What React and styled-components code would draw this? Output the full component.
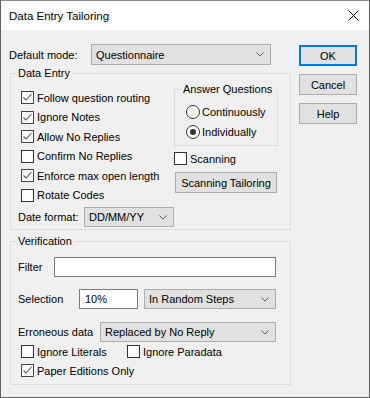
import React from "react";
import styled, { createGlobalStyle } from "styled-components";

const GlobalStyle = createGlobalStyle`
  html, body {
    margin: 0;
    padding: 0;
    background: #f0f0f0;
  }
  body {
    font-family: "Liberation Sans", Arial, sans-serif;
    font-size: 11px;
    color: #000;
  }
`;

const Window = styled.div`
  width: 370px;
  height: 398px;
  box-sizing: border-box;
  border: 1px solid #5f5f5f;
  border-top-color: #8a8a8a;
  background: #f0f0f0;
  display: flex;
  flex-direction: column;
`;

const TitleBar = styled.div`
  height: 29px;
  background: #fff;
  display: flex;
  align-items: center;
  justify-content: space-between;
  padding: 0 10px 0 8px;
`;

const Title = styled.span`
  font-size: 11.5px;
  line-height: 14px;
`;

const Body = styled.div`
  flex: 1;
  display: flex;
  padding-left: 8px;
`;

const Main = styled.div`
  width: 282px;
  display: flex;
  flex-direction: column;
`;

const Side = styled.div`
  margin-left: 8px;
  padding-top: 15px;
  display: flex;
  flex-direction: column;
  gap: 8px;
`;

const Button = styled.button`
  box-sizing: border-box;
  width: ${(p) => p.width || 58}px;
  height: 21px;
  margin: 0;
  padding: 0;
  font-family: inherit;
  font-size: 11px;
  color: #000;
  background: #e1e1e1;
  border: ${(p) => (p.primary ? "2px solid #0078d7" : "1px solid #adadad")};
  border-radius: 0;
`;

const Row = styled.div`
  display: flex;
  align-items: center;
  height: ${(p) => p.h || 20}px;
  margin-top: ${(p) => p.mt || 0}px;
  margin-left: ${(p) => p.ml || 0}px;
`;

const Label = styled.span`
  width: ${(p) => p.w}px;
  flex-shrink: 0;
  white-space: nowrap;
`;

const SelectBox = styled.div`
  box-sizing: border-box;
  width: ${(p) => p.w}px;
  height: ${(p) => p.h || 20}px;
  background: #e1e1e1;
  border: 1px solid #adadad;
  display: flex;
  align-items: center;
  justify-content: space-between;
  padding: 0 6px 0 4px;
  white-space: nowrap;
`;

const TextInput = styled.div`
  box-sizing: border-box;
  width: ${(p) => p.w}px;
  height: 20px;
  background: #fff;
  border: 1px solid #7a7a7a;
  display: flex;
  align-items: center;
  padding-left: ${(p) => p.pl || 4}px;
`;

const Group = styled.fieldset`
  margin: ${(p) => p.mt || 0}px 0 0 ${(p) => p.ml ?? 1}px;
  padding: 0;
  width: ${(p) => p.w}px;
  box-sizing: border-box;
  border: 1px solid #dcdcdc;
  min-width: 0;
`;

const Legend = styled.legend`
  margin-left: ${(p) => p.ml || 5}px;
  padding: 0 2px;
  font-size: 11px;
  line-height: 14px;
  height: 14px;
`;

const DataEntryBody = styled.div`
  display: flex;
`;

const LeftCol = styled.div`
  width: 163px;
  box-sizing: border-box;
  padding: 8px 0 2px 10px;
  display: flex;
  flex-direction: column;
`;

const RightCol = styled.div`
  width: 104px;
  display: flex;
  flex-direction: column;
`;

const RadioList = styled.div`
  padding: 6px 0 3px 11px;
`;

const VerifyBody = styled.div`
  padding: 0 0 4px 7px;
  display: flex;
  flex-direction: column;
`;

const Item = styled.label`
  display: flex;
  align-items: center;
  gap: ${(p) => p.gap ?? 3}px;
  height: ${(p) => p.h || 19.5}px;
  width: ${(p) => (p.w ? `${p.w}px` : "auto")};
  white-space: nowrap;
`;

const Box = styled.span`
  box-sizing: border-box;
  width: 13px;
  height: 13px;
  flex-shrink: 0;
  background: #fff;
  border: 1px solid ${(p) => (p.checked ? "#444" : "#333")};
  display: flex;
  align-items: center;
  justify-content: center;
`;

const Circle = styled.span`
  box-sizing: border-box;
  width: 14px;
  height: 14px;
  flex-shrink: 0;
  border-radius: 50%;
  background: #fff;
  border: 1px solid #333;
  display: flex;
  align-items: center;
  justify-content: center;
`;

const Dot = styled.span`
  width: 6px;
  height: 6px;
  border-radius: 50%;
  background: #333;
`;

const Chevron = () => (
  <svg width="8" height="5" viewBox="0 0 8 5">
    <polyline points="0.5,0.5 4,4 7.5,0.5" fill="none" stroke="#606060" strokeWidth="1" />
  </svg>
);

const CloseIcon = () => (
  <svg width="11" height="11" viewBox="0 0 11 11">
    <path d="M0.5 0.5 L10.5 10.5 M10.5 0.5 L0.5 10.5" stroke="#000" strokeWidth="1" />
  </svg>
);

const Check = ({ checked, children, w, h }) => (
  <Item w={w} h={h}>
    <Box checked={checked}>
      {checked && (
        <svg width="11" height="11" viewBox="0 0 11 11">
          <polyline points="1.5,5.5 4,8 9.5,2" fill="none" stroke="#555" strokeWidth="1.1" />
        </svg>
      )}
    </Box>
    {children}
  </Item>
);

const Radio = ({ checked, children }) => (
  <Item h={20} gap={2}>
    <Circle>{checked && <Dot />}</Circle>
    {children}
  </Item>
);

const Select = ({ w, h, children }) => (
  <SelectBox w={w} h={h}>
    <span>{children}</span>
    <Chevron />
  </SelectBox>
);

export default function App() {
  return (
    <>
      <GlobalStyle />
      <Window>
        <TitleBar>
          <Title>Data Entry Tailoring</Title>
          <CloseIcon />
        </TitleBar>
        <Body>
          <Main>
            <Row mt={14} h={21}>
              <Label w={82}>Default mode:</Label>
              <Select w={180} h={21}>Questionnaire</Select>
            </Row>

            <Group mt={1} w={281}>
              <Legend ml={5}>Data Entry</Legend>
              <DataEntryBody>
                <LeftCol>
                  <Check checked>Follow question routing</Check>
                  <Check checked>Ignore Notes</Check>
                  <Check checked>Allow No Replies</Check>
                  <Check>Confirm No Replies</Check>
                  <Check checked>Enforce max open length</Check>
                  <Check>Rotate Codes</Check>
                  <Row mt={2} ml={-3}>
                    <Label w={66}>Date format:</Label>
                    <Select w={90}>DD/MM/YY</Select>
                  </Row>
                </LeftCol>
                <RightCol>
                  <Group mt={2} ml={0} w={104}>
                    <Legend ml={6}>Answer Questions</Legend>
                    <RadioList>
                      <Radio>Continuously</Radio>
                      <Radio checked>Individually</Radio>
                    </RadioList>
                  </Group>
                  <Row mt={6} h={13}>
                    <Check h={13}>Scanning</Check>
                  </Row>
                  <Row mt={7} ml={1} h={21}>
                    <Button width={102}>Scanning Tailoring</Button>
                  </Row>
                </RightCol>
              </DataEntryBody>
            </Group>

            <Group mt={4} w={281}>
              <Legend ml={5}>Verification</Legend>
              <VerifyBody>
                <Row mt={9}>
                  <Label w={36}>Filter</Label>
                  <TextInput w={222} />
                </Row>
                <Row mt={12}>
                  <Label w={61}>Selection</Label>
                  <TextInput w={59} pl={5}>10%</TextInput>
                  <Row ml={6}>
                    <Select w={132}>In Random Steps</Select>
                  </Row>
                </Row>
                <Row mt={13}>
                  <Label w={82}>Erroneous data</Label>
                  <Select w={176}>Replaced by No Reply</Select>
                </Row>
                <Row ml={3} h={19}>
                  <Check w={106} h={19}>Ignore Literals</Check>
                  <Check h={19}>Ignore Paradata</Check>
                </Row>
                <Row ml={3} h={19}>
                  <Check checked h={19}>Paper Editions Only</Check>
                </Row>
              </VerifyBody>
            </Group>
          </Main>
          <Side>
            <Button primary>OK</Button>
            <Button>Cancel</Button>
            <Button>Help</Button>
          </Side>
        </Body>
      </Window>
    </>
  );
}
